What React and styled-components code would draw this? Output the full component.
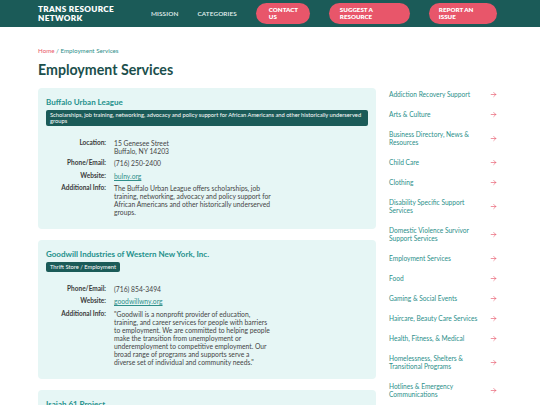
import React from "react";
import styled, { createGlobalStyle } from "styled-components";

const GlobalStyle = createGlobalStyle`
  html, body {
    margin: 0;
    padding: 0;
    background: #ffffff;
    font-family: "Lato", "Open Sans", sans-serif;
    overflow: hidden;
  }
  * { box-sizing: border-box; }
`;

const Header = styled.header`
  height: 27px;
  background: #1b5b58;
  display: flex;
  align-items: center;
  padding-left: 38px;
`;

const Logo = styled.div`
  color: #ffffff;
  font-weight: 800;
  font-size: 8.2px;
  line-height: 8.5px;
  letter-spacing: 0.3px;
  text-transform: uppercase;
  width: 80px;
`;

const Nav = styled.nav`
  display: flex;
  align-items: center;
  gap: 19px;
  margin-left: 33px;
`;

const NavLink = styled.a`
  color: #e6f2f1;
  font-size: 6.4px;
  font-weight: 600;
  letter-spacing: 0.1px;
  text-transform: uppercase;
`;

const Pill = styled.a`
  display: flex;
  align-items: center;
  height: 21px;
  width: ${(p) => p.$w}px;
  padding-left: ${(p) => p.$pl}px;
  border-radius: 11px;
  background: #e8566a;
  color: #ffffff;
  font-size: 6.2px;
  line-height: 6.8px;
  font-weight: 800;
  text-transform: uppercase;
`;

const Page = styled.div`
  display: flex;
  gap: 5px;
  padding: 20px 0 0 38px;
`;

const Main = styled.main`
  width: 338px;
`;

const Crumbs = styled.div`
  font-size: 6.2px;
  line-height: 7px;
  color: #2f8f8a;
  margin-bottom: 7px;
  span { color: #e8566a; }
`;

const Title = styled.h1`
  margin: 0 0 10px;
  font-size: 14.2px;
  line-height: 17px;
  font-weight: 700;
  color: #1b4f4c;
`;

const Card = styled.section`
  background: #e6f6f5;
  border-radius: 4px;
  padding: 9px 8px 13px;
  margin-bottom: 11px;
`;

const CardTitle = styled.h2`
  margin: 0 0 3px;
  font-size: 8px;
  line-height: 10px;
  font-weight: 700;
  color: #24918c;
`;

const Tag = styled.div`
  width: ${(p) => (p.$fit ? "fit-content" : "auto")};
  background: #1b5b58;
  color: #ffffff;
  font-size: 5.75px;
  line-height: 6.4px;
  padding: 1.5px 4px;
  border-radius: 2px;
  margin-bottom: 13px;
`;

const Fields = styled.dl`
  display: grid;
  grid-template-columns: 60px 157px;
  column-gap: 8px;
  row-gap: 4.5px;
  margin: 0;
`;

const Label = styled.dt`
  text-align: right;
  font-weight: 700;
  font-size: 6.5px;
  line-height: 8px;
  color: #3b3b3b;
`;

const Value = styled.dd`
  margin: 0;
  font-size: 6.75px;
  line-height: 8px;
  color: #454545;
  a { color: #2f8f8a; text-decoration: underline; }
`;

const Sidebar = styled.aside`
  width: 116px;
  padding-top: 37px;
`;

const SideItem = styled.a`
  display: flex;
  align-items: center;
  justify-content: space-between;
  padding: 6px 0 6px 8px;
  font-size: 6.6px;
  line-height: 8px;
  color: #2b8f8a;
`;

const SideText = styled.span`
  max-width: 94px;
`;

const Arrow = () => (
  <svg width="7" height="7" viewBox="0 0 24 24" fill="none" stroke="#e8566a" strokeWidth="2.2" strokeLinecap="round" strokeLinejoin="round">
    <path d="M4 12h16M13 5l7 7-7 7" />
  </svg>
);

const categories = [
  "Addiction Recovery Support",
  "Arts & Culture",
  "Business Directory, News & Resources",
  "Child Care",
  "Clothing",
  "Disability Specific Support Services",
  "Domestic Violence Survivor Support Services",
  "Employment Services",
  "Food",
  "Gaming & Social Events",
  "Haircare, Beauty Care Services",
  "Health, Fitness, & Medical",
  "Homelessness, Shelters & Transitional Programs",
  "Hotlines & Emergency Communications",
];

const Field = ({ label, children }) => (
  <>
    <Label>{label}</Label>
    <Value>{children}</Value>
  </>
);

export default function App() {
  return (
    <>
      <GlobalStyle />
      <Header>
        <Logo>Trans Resource Network</Logo>
        <Nav>
          <NavLink>Mission</NavLink>
          <NavLink>Categories</NavLink>
          <Pill $w={54} $pl={13}>Contact<br />Us</Pill>
          <Pill $w={81} $pl={11}>Suggest a<br />Resource</Pill>
          <Pill $w={68} $pl={10}>Report an<br />Issue</Pill>
        </Nav>
      </Header>
      <Page>
        <Main>
          <Crumbs><span>Home</span> / Employment Services</Crumbs>
          <Title>Employment Services</Title>
          <Card>
            <CardTitle>Buffalo Urban League</CardTitle>
            <Tag>Scholarships, job training, networking, advocacy and policy support for African Americans and other historically underserved groups</Tag>
            <Fields>
              <Field label="Location:">15 Genesee Street<br />Buffalo, NY 14203</Field>
              <Field label="Phone/Email:">(716) 250-2400</Field>
              <Field label="Website:"><a>bulny.org</a></Field>
              <Field label="Additional Info:">The Buffalo Urban League offers scholarships, job training, networking, advocacy and policy support for African Americans and other historically underserved groups.</Field>
            </Fields>
          </Card>
          <Card>
            <CardTitle>Goodwill Industries of Western New York, Inc.</CardTitle>
            <Tag $fit>Thrift Store / Employment</Tag>
            <Fields>
              <Field label="Phone/Email:">(716) 854-3494</Field>
              <Field label="Website:"><a>goodwillwny.org</a></Field>
              <Field label="Additional Info:">"Goodwill is a nonprofit provider of education, training, and career services for people with barriers to employment. We are committed to helping people make the transition from unemployment or underemployment to competitive employment. Our broad range of programs and supports serve a diverse set of individual and community needs."</Field>
            </Fields>
          </Card>
          <Card>
            <CardTitle>Isaiah 61 Project</CardTitle>
          </Card>
        </Main>
        <Sidebar>
          {categories.map((c) => (
            <SideItem key={c}>
              <SideText>{c}</SideText>
              <Arrow />
            </SideItem>
          ))}
        </Sidebar>
      </Page>
    </>
  );
}
